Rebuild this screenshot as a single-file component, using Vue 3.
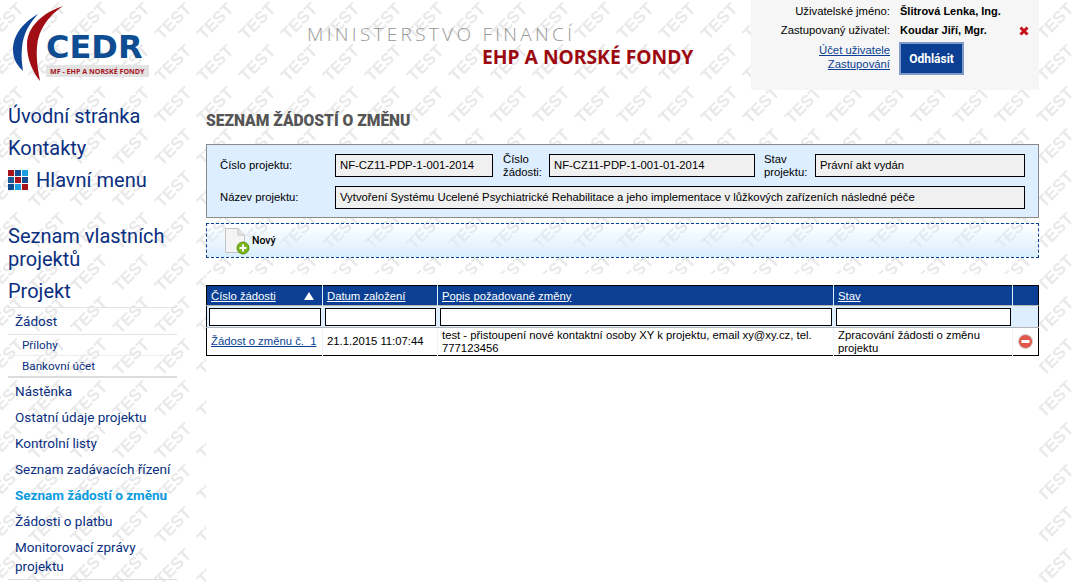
<template>
  <div class="page">
    <svg class="watermark" width="1077" height="582" aria-hidden="true">
      <defs>
        <pattern id="wm" width="42" height="42" patternUnits="userSpaceOnUse" x="26" y="0">
          <text x="21" y="27" text-anchor="middle" transform="rotate(-45 21 21)" class="wm-text">TEST</text>
        </pattern>
      </defs>
      <rect width="1077" height="582" fill="url(#wm)" />
    </svg>

    <header class="top">
      <div class="logo">
        <svg class="swoosh" width="66" height="84" viewBox="0 0 66 84">
          <path d="M38 14 C24 22 13 34 13 50 C13 60 18 66 23 71 C22 64 21 56 22 48 C23 34 29 24 38 14Z" fill="#0f4596" />
          <path d="M63 6 C42 13 27 27 27 45 C27 60 33 72 40 81 C38 70 36 58 37 47 C38 30 48 16 63 6Z" fill="#a00d12" />
        </svg>
        <div class="logo-cedr">CEDR</div>
        <div class="logo-sub">MF - EHP A NORSKÉ FONDY</div>
      </div>

      <div class="ministry">
        <div class="ministry-top">MINISTERSTVO FINANCÍ</div>
        <div class="ministry-bottom">EHP A NORSKÉ FONDY</div>
      </div>

      <div class="user-box">
        <div class="user-row">
          <span class="user-label">Uživatelské jméno:</span>
          <b class="user-value">Šlitrová Lenka, Ing.</b>
        </div>
        <div class="user-row">
          <span class="user-label">Zastupovaný uživatel:</span>
          <b class="user-value">Koudar Jiří, Mgr.</b>
          <svg class="user-x" width="10" height="10" viewBox="0 0 10 10">
            <path d="M1.5 1.5 L8.5 8.5 M8.5 1.5 L1.5 8.5" stroke="#c8101a" stroke-width="3" />
          </svg>
        </div>
        <div class="user-actions">
          <div class="user-links">
            <a href="#">Účet uživatele</a>
            <a href="#">Zastupování</a>
          </div>
          <button class="logout">Odhlásit</button>
        </div>
      </div>
    </header>

    <div class="body">
      <nav class="side">
        <a class="nav-big" href="#">Úvodní stránka</a>
        <a class="nav-big" href="#">Kontakty</a>
        <a class="nav-big nav-menu" href="#">
          <svg width="20" height="20" viewBox="0 0 20 20">
            <rect v-for="c in menuCells" :key="c.x + '-' + c.y" :x="c.x" :y="c.y" width="6" height="6" :fill="c.fill" />
          </svg>
          Hlavní menu
        </a>

        <a class="nav-big nav-projects" href="#">Seznam vlastních projektů</a>
        <a class="nav-big nav-project" href="#">Projekt</a>

        <a class="nav-item nav-first" href="#">Žádost</a>
        <div class="nav-sub">
          <a href="#">Přílohy</a>
          <a href="#">Bankovní účet</a>
        </div>
        <div class="nav-list">
          <a
            v-for="item in navItems"
            :key="item.label"
            class="nav-item"
            :class="{ active: item.active }"
            href="#"
          >{{ item.label }}</a>
        </div>
      </nav>

      <main class="content">
        <h1>SEZNAM ŽÁDOSTÍ O ZMĚNU</h1>

        <section class="info">
          <div class="info-row">
            <label class="lbl-first">Číslo projektu:</label>
            <div class="field f-project">NF-CZ11-PDP-1-001-2014</div>
            <label class="lbl-request">Číslo<br />žádosti:</label>
            <div class="field f-request">NF-CZ11-PDP-1-001-01-2014</div>
            <label class="lbl-state">Stav<br />projektu:</label>
            <div class="field f-state">Právní akt vydán</div>
          </div>
          <div class="info-row">
            <label class="lbl-first">Název projektu:</label>
            <div class="field f-name">Vytvoření Systému Ucelené Psychiatrické Rehabilitace a jeho implementace v lůžkových zařízeních následné péče</div>
          </div>
        </section>

        <div class="toolbar">
          <svg class="new-icon" width="26" height="28" viewBox="0 0 26 28">
            <path d="M1.5 1.5 H14 L20.5 8 V25.5 H1.5Z" fill="#f4f4f4" stroke="#c4c4c4" />
            <path d="M14 1.5 V8 H20.5" fill="#e4e4e4" stroke="#c4c4c4" />
            <circle cx="19" cy="21" r="6" fill="#7ab51d" stroke="#5f9413" />
            <path d="M19 17.5 V24.5 M15.5 21 H22.5" stroke="#fff" stroke-width="2" />
          </svg>
          <span>Nový</span>
        </div>

        <div class="grid-area">
          <table class="grid">
            <colgroup>
              <col style="width: 116px" />
              <col style="width: 115px" />
              <col style="width: 396px" />
              <col style="width: 179px" />
              <col style="width: 26px" />
            </colgroup>
            <thead>
              <tr class="head">
                <th>
                  <div class="sort-cell">
                    <a href="#">Číslo žádosti</a>
                    <span class="sort-arrow"></span>
                  </div>
                </th>
                <th><a href="#">Datum založení</a></th>
                <th><a href="#">Popis požadované změny</a></th>
                <th><a href="#">Stav</a></th>
                <th></th>
              </tr>
              <tr class="filter">
                <td v-for="n in 4" :key="n"><input type="text" /></td>
                <td></td>
              </tr>
            </thead>
            <tbody>
              <tr class="row">
                <td class="c-link"><a href="#">Žádost o změnu č.&nbsp; 1</a></td>
                <td class="c-date">21.1.2015 11:07:44</td>
                <td>test - přistoupení nové kontaktní osoby XY k projektu, email xy@xy.cz, tel. 777123456</td>
                <td>Zpracování žádosti o změnu projektu</td>
                <td class="c-del">
                  <svg width="15" height="15" viewBox="0 0 15 15">
                    <circle cx="7.5" cy="7.5" r="7" fill="#e2574b" stroke="#cfd6d4" stroke-width="1" />
                    <rect x="3.5" y="6" width="8" height="3" fill="#fff" />
                  </svg>
                </td>
              </tr>
            </tbody>
          </table>
        </div>
      </main>
    </div>
  </div>
</template>

<script setup>
const navItems = [
  { label: 'Nástěnka' },
  { label: 'Ostatní údaje projektu' },
  { label: 'Kontrolní listy' },
  { label: 'Seznam zadávacích řízení' },
  { label: 'Seznam žádostí o změnu', active: true },
  { label: 'Žádosti o platbu' },
  { label: 'Monitorovací zprávy projektu' }
]

const menuColors = ['#a5141c', '#0f4f9a', '#1a9fe0', '#1a5a9c', '#a5141c', '#134c8e', '#134c8e', '#1a9fe0', '#a5141c']
const menuCells = menuColors.map((fill, i) => ({
  x: (i % 3) * 7,
  y: Math.floor(i / 3) * 7,
  fill
}))
</script>

<style>
html, body {
  margin: 0;
  background: #fff;
  overflow: hidden;
}
</style>

<style scoped>
.page {
  position: relative;
  width: 1077px;
  height: 582px;
  overflow: hidden;
  font-family: "Liberation Sans", Arial, sans-serif;
  font-size: 11.3px;
  color: #000;
}

.watermark {
  position: absolute;
  left: 0;
  top: 0;
}

.wm-text {
  font-family: "Liberation Sans", sans-serif;
  font-size: 17px;
  font-weight: bold;
  fill: #e9e9e9;
}

.top {
  position: relative;
  height: 100px;
  display: flex;
}

.logo {
  position: relative;
  width: 206px;
  flex: none;
}

.swoosh {
  position: absolute;
  left: 0;
  top: 0;
}

.logo-cedr {
  position: absolute;
  left: 46px;
  top: 30px;
  font-family: "DejaVu Sans", sans-serif;
  font-weight: 700;
  font-size: 32px;
  line-height: 34px;
  color: #0f4d92;
}

.logo-sub {
  position: absolute;
  left: 46px;
  top: 65px;
  width: 103px;
  height: 12px;
  line-height: 12px;
  background: #e3e3e3;
  color: #a5141c;
  font-family: "Open Sans", sans-serif;
  font-weight: 700;
  font-size: 7.1px;
  text-indent: 4px;
  white-space: nowrap;
}

.ministry {
  width: 388px;
  flex: none;
  padding: 22px 0 0 101px;
}

.ministry-top {
  font-family: "Open Sans", sans-serif;
  font-weight: 300;
  font-size: 19px;
  line-height: 24px;
  letter-spacing: 3.3px;
  color: #969696;
  white-space: nowrap;
}

.ministry-bottom {
  font-family: "Noto Sans", sans-serif;
  font-weight: 700;
  font-size: 19.3px;
  line-height: 22px;
  color: #9c0a10;
  padding-left: 175px;
  white-space: nowrap;
}

.user-box {
  position: absolute;
  left: 751px;
  top: 0;
  width: 288px;
  height: 90px;
  background: #f6f6f6;
}

.user-row {
  position: relative;
  display: flex;
  height: 19px;
  line-height: 22px;
}

.user-label {
  width: 139px;
  text-align: right;
  flex: none;
}

.user-value {
  margin-left: 10px;
  font-size: 11px;
}

.user-x {
  position: absolute;
  left: 268px;
  top: 7px;
}

.user-actions {
  display: flex;
  margin-top: 4px;
}

.user-links {
  width: 139px;
  flex: none;
  text-align: right;
  line-height: 13.5px;
  padding-top: 2px;
}

.user-links a {
  display: block;
  color: #0a3f93;
}

.logout {
  margin-left: 9px;
  width: 65px;
  height: 33px;
  background: #0a3f93;
  border: 2px solid #7f9cc9;
  color: #fff;
  font-family: "Roboto", sans-serif;
  font-weight: 700;
  font-size: 12px;
  padding: 0;
}

.body {
  position: relative;
  display: flex;
}

.side {
  width: 206px;
  flex: none;
  padding-left: 8px;
  box-sizing: border-box;
  font-family: "Roboto", sans-serif;
}

.side a {
  color: #0a2f80;
  text-decoration: none;
}

.nav-big {
  display: block;
  font-size: 20px;
  line-height: 32px;
  width: 170px;
}

.nav-menu {
  display: flex;
  align-items: center;
  gap: 8px;
  width: auto;
}

.nav-projects {
  margin-top: 29px;
  line-height: 23px;
}

.nav-project {
  margin-top: 4px;
}

.nav-item {
  display: block;
  width: 162px;
  padding: 3.5px 0 3.5px 7px;
  font-size: 13.5px;
  line-height: 19px;
}

.nav-first {
  border-top: 1px solid #e4e4e4;
}

.side .nav-item.active {
  color: #0a9be0;
  font-weight: 700;
}

.nav-sub {
  width: 169px;
  box-sizing: border-box;
  border-top: 1px solid #e4e4e4;
  border-bottom: 2px solid #dcdcdc;
}

.nav-sub a {
  display: block;
  padding-left: 14px;
  font-size: 11.7px;
  line-height: 20px;
}

.nav-sub a + a {
  border-top: 1px solid #ececec;
}

.nav-list {
  width: 169px;
  border-bottom: 1px solid #dcdcdc;
}

.content {
  width: 833px;
  flex: none;
}

h1 {
  margin: 9px 0 11px;
  font-family: "Roboto", sans-serif;
  font-weight: 900;
  font-size: 15.6px;
  line-height: 24px;
  color: #555;
}

.info {
  height: 74px;
  box-sizing: border-box;
  border: 1px solid #8a8a8a;
  background: #dceeff;
  padding: 9px 13px 0;
}

.info-row {
  display: flex;
  align-items: center;
  height: 23px;
  margin-bottom: 9px;
}

.info label {
  line-height: 13px;
}

.lbl-first {
  width: 115px;
  flex: none;
}

.lbl-request {
  width: 46px;
  flex: none;
  margin-left: 10px;
}

.lbl-state {
  width: 51px;
  flex: none;
  margin-left: 9px;
}

.field {
  box-sizing: border-box;
  height: 23px;
  line-height: 21px;
  border: 1px solid #000;
  background: #f0f0f0;
  padding-left: 4px;
  white-space: nowrap;
}

.f-project { width: 158px; }
.f-request { width: 206px; }
.f-state { width: 210px; }
.f-name { width: 690px; }

.toolbar {
  margin-top: 5px;
  height: 35px;
  box-sizing: border-box;
  border: 1px dashed #0a3f93;
  background: linear-gradient(to bottom, rgba(255, 255, 255, 0), #d8eefc);
  display: flex;
  align-items: center;
  padding-left: 17px;
  font-family: "Roboto", sans-serif;
  font-weight: 500;
  font-size: 10.5px;
}

.new-icon {
  margin-right: 2px;
}

.grid-area {
  margin-top: 16px;
  padding-top: 11px;
  background: #fff;
  height: 320px;
}

.grid {
  width: 833px;
  table-layout: fixed;
  border-collapse: collapse;
  border: 1px solid #000;
}

.head th {
  height: 19px;
  padding: 0 4px;
  background: #0a3f93;
  border-left: 1px solid #dceeff;
  text-align: left;
  font-weight: 400;
}

.head th:first-child {
  border-left: 0;
}

.head a {
  color: #fff;
}

.sort-cell {
  display: flex;
  justify-content: space-between;
  align-items: center;
  padding-right: 4px;
}

.sort-arrow {
  width: 0;
  height: 0;
  border-left: 5px solid transparent;
  border-right: 5px solid transparent;
  border-bottom: 8px solid #fff;
}

.filter td {
  height: 21px;
  padding: 0 2px;
  background: #dceeff;
  border-top: 1px solid #b5b5b5;
  border-bottom: 1px solid #b5b5b5;
}

.filter input {
  display: block;
  box-sizing: border-box;
  width: 100%;
  height: 18px;
  padding: 0;
  border: 1px solid #000;
  background: #fff;
  border-radius: 0;
}

.row td {
  padding: 0 4px;
  height: 27px;
  line-height: 13px;
  background: #fff;
  border-left: 1px solid #eef3f6;
  vertical-align: middle;
}

.row td:first-child {
  border-left: 0;
}

.c-link a {
  color: #0a3f93;
  white-space: nowrap;
}

.c-date {
  white-space: nowrap;
}

.c-del svg {
  display: block;
  margin: 0 auto;
}
</style>
